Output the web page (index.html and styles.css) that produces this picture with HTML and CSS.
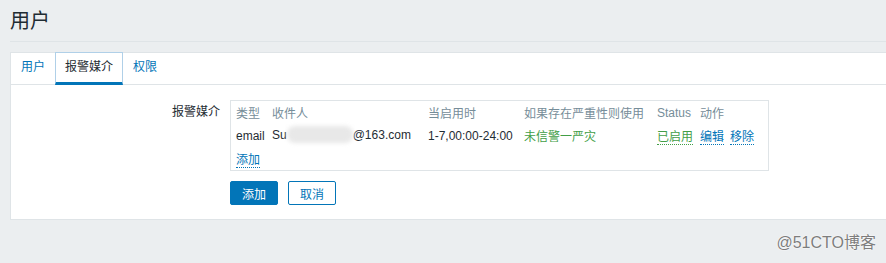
FILE: index.html
```html
<!DOCTYPE html>
<html lang="zh-CN">
<head>
  <meta charset="UTF-8">
  <title>用户</title>
  <link rel="stylesheet" href="styles.css">
</head>
<body>
  <div class="page">
    <header class="header-title">
      <h1>用户</h1>
    </header>

    <div class="card">
      <ul class="tabs">
        <li><a class="tab-link">用户</a></li>
        <li class="active"><a class="tab-link">报警媒介</a></li>
        <li><a class="tab-link">权限</a></li>
      </ul>

      <div class="form">
        <div class="form-row">
          <label class="form-label">报警媒介</label>
          <div class="media-box">
            <div class="media-grid">
              <div class="th">类型</div>
              <div class="th">收件人</div>
              <div class="th">当启用时</div>
              <div class="th">如果存在严重性则使用</div>
              <div class="th">Status</div>
              <div class="th">动作</div>

              <div class="td">email</div>
              <div class="td">Su<span class="blurred"></span>@163.com</div>
              <div class="td">1-7,00:00-24:00</div>
              <div class="td green">未信警一严灾</div>
              <div class="td"><a class="link-dotted green">已启用</a></div>
              <div class="td actions"><a class="link-dotted">编辑</a><a class="link-dotted">移除</a></div>

              <div class="td full"><a class="link-dotted">添加</a></div>
            </div>
          </div>
        </div>

        <div class="form-buttons">
          <button class="btn btn-primary">添加</button>
          <button class="btn btn-alt">取消</button>
        </div>
      </div>
    </div>
  </div>

  <div class="watermark">@51CTO博客</div>
</body>
</html>
```

FILE: styles.css
```css
:root {
  --bg: #ebeef0;
  --text: #1f2c33;
  --muted: #768d99;
  --blue: #0275b8;
  --green: #429e47;
  --border: #dfe4e7;
  --white: #ffffff;
}
html, body {
  margin: 0;
  padding: 0;
}
body {
  background: var(--bg);
  color: var(--text);
  font-family: "Liberation Sans", "Noto Sans CJK SC", Arial, sans-serif;
  font-size: 12px;
  height: 263px;
  overflow: hidden;
  position: relative;
}
.page {
  padding-left: 10px;
}
.header-title {
  border-bottom: 1px solid var(--border);
  padding: 9px 0 7px;
}
.header-title h1 {
  margin: 0;
  font-size: 20px;
  font-weight: normal;
  line-height: 25px;
}
.card {
  margin-top: 10px;
  background: var(--white);
  border: 1px solid var(--border);
  border-right: none;
  height: 168px;
  box-sizing: border-box;
}
.tabs {
  list-style: none;
  margin: 0;
  padding: 0;
  display: flex;
  border-bottom: 1px solid var(--border);
  height: 31px;
}
.tabs li {
  display: flex;
}
.tab-link {
  display: block;
  padding: 0 9px;
  line-height: 29px;
  color: var(--blue);
  border: 1px solid transparent;
  border-bottom: 3px solid transparent;
  margin-top: -1px;
  height: 29px;
}
.tabs li.active .tab-link {
  color: var(--text);
  border-color: #b0d0e8;
  border-bottom-color: var(--blue);
}
.form {
  padding: 15px 0 14px;
}
.form-row {
  display: flex;
  gap: 10px;
}
.form-label {
  width: 209px;
  text-align: right;
  line-height: 22px;
  padding-top: 1px;
}
.media-box {
  width: 539px;
  border: 1px solid var(--border);
  box-sizing: border-box;
  padding: 0 5px;
}
.media-grid {
  display: grid;
  grid-template-columns: 36px 156px 96px 133px 43px auto;
  grid-auto-rows: 23px;
  align-items: center;
}
.th {
  color: var(--muted);
}
.td {
  white-space: nowrap;
}
.full {
  grid-column: 1 / -1;
}
.green {
  color: var(--green);
}
.link-dotted {
  color: var(--blue);
  border-bottom: 1px dotted var(--blue);
  cursor: pointer;
}
.link-dotted.green {
  color: var(--green);
  border-bottom-color: var(--green);
}
.actions {
  display: flex;
  gap: 6px;
}
.blurred {
  display: inline-block;
  width: 66px;
  height: 17px;
  vertical-align: middle;
  margin-top: -2px;
  background: #e8e8e8;
  border-radius: 8px;
  filter: blur(2px);
}
.form-buttons {
  display: flex;
  gap: 10px;
  padding-left: 219px;
  margin-top: 10px;
}
.btn {
  font-family: inherit;
  font-size: 12px;
  height: 24px;
  width: 48px;
  border-radius: 2px;
  padding: 0;
  cursor: pointer;
  box-sizing: border-box;
}
.btn-primary {
  background: var(--blue);
  color: var(--white);
  border: 1px solid var(--blue);
}
.btn-alt {
  background: var(--white);
  color: var(--blue);
  border: 1px solid var(--blue);
}
.watermark {
  position: absolute;
  right: 10px;
  bottom: 10px;
  font-size: 16px;
  color: #7d7d7d;
  text-shadow: 0 0 2px #fff, 0 0 1px #fff;
}
```
